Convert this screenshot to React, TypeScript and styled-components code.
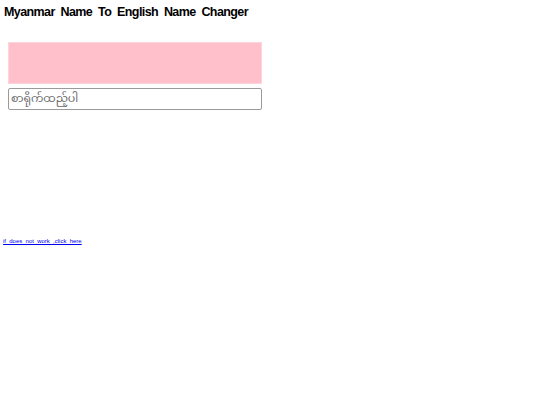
import styled, { createGlobalStyle } from "styled-components";

const GlobalStyle = createGlobalStyle`
  body {
    margin: 0;
    background: #ffffff;
    font-family: "Liberation Sans", Arial, sans-serif;
  }
`;

const Page = styled.div`
  display: flex;
  flex-direction: column;
  width: 540px;
  height: 405px;
`;

const Title = styled.h1`
  margin: 5px 0 0 4px;
  font-size: 12.5px;
  font-weight: bold;
  letter-spacing: -0.6px;
  word-spacing: 3px;
  color: #000;
  line-height: 15px;
`;

const Converter = styled.div`
  display: flex;
  flex-direction: column;
  gap: 4px;
  margin: 22px 0 0 8px;
  width: 254px;
`;

// output area shows the converted english name
const Output = styled.div`
  height: 42px;
  background: #ffc0cb;
  border: 1px solid #fdd4da;
  box-sizing: border-box;
`;

const NameInput = styled.input`
  height: 22px;
  box-sizing: border-box;
  border: 1px solid #9a9a9a;
  border-radius: 2px;
  padding: 0 2px;
  font-size: 11px;
  font-family: "Noto Sans Myanmar", "Padauk", "Myanmar Text", sans-serif;
  &::placeholder {
    color: #6a6a6a;
  }
`;

const HelpLink = styled.a`
  margin: 128px 0 0 3px;
  font-size: 6px;
  word-spacing: 1.6px;
  color: #0000ee;
  text-decoration: underline;
`;

export default function App() {
  return (
    <>
      <GlobalStyle />
      <Page>
        <Title>Myanmar Name To English Name Changer</Title>
        <Converter>
          <Output />
          <NameInput placeholder="စာရိုက်ထည့်ပါ" />
        </Converter>
        <HelpLink href="#">if does not work ,click here</HelpLink>
      </Page>
    </>
  );
}
